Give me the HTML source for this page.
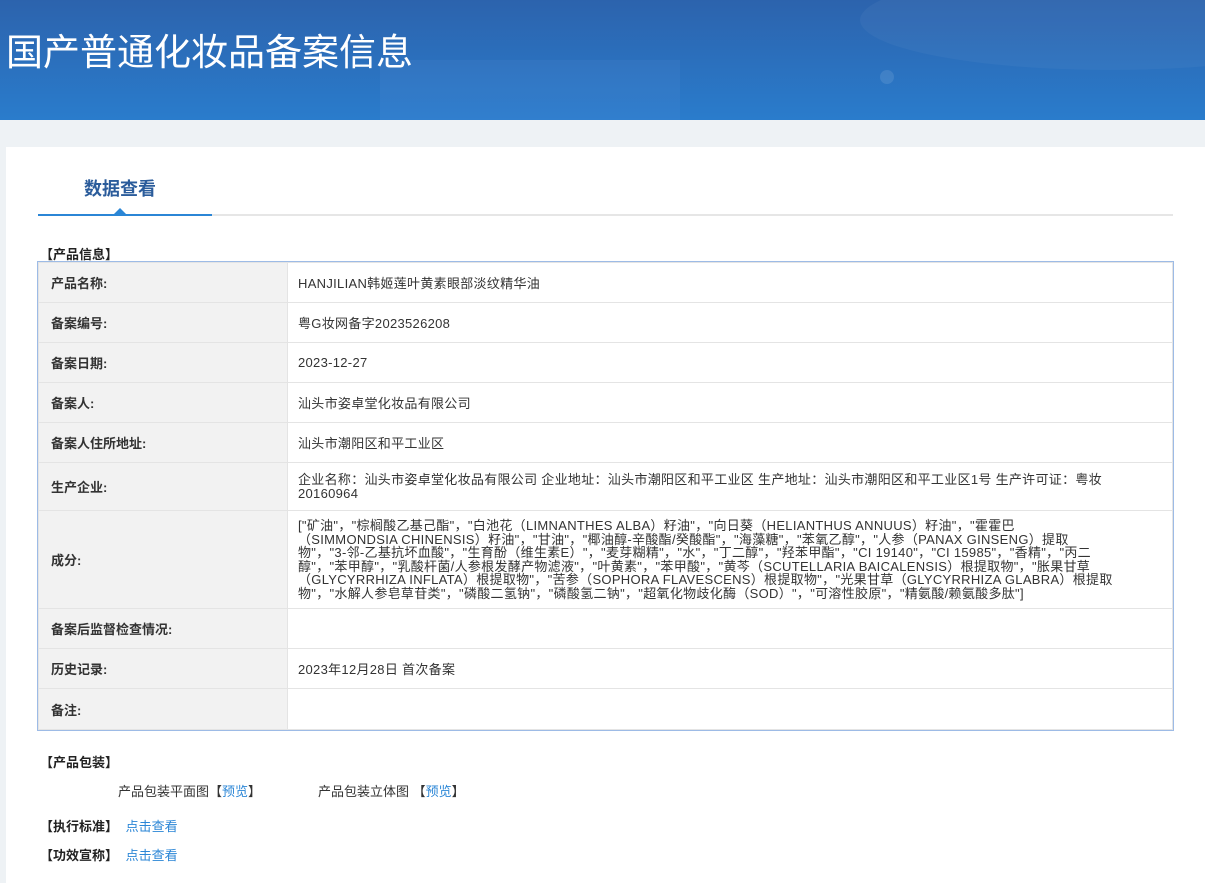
<!DOCTYPE html>
<html><head><meta charset="utf-8">
<style>
*{margin:0;padding:0;box-sizing:border-box}
body{width:1205px;height:883px;overflow:hidden;background:#eef2f5;font-family:"Liberation Sans","Noto Sans CJK SC",sans-serif;color:#333;font-size:13px;position:relative}
.hdr{position:absolute;left:0;top:0;width:1205px;height:120px;background:linear-gradient(180deg,#2c63ad 0%,#2a7ccc 100%);overflow:hidden}
.hdr h1{position:absolute;left:6px;top:22px;color:#fff;font-size:37px;font-weight:normal}
.blob{position:absolute;border-radius:50%;background:rgba(255,255,255,0.04)}
.panel{position:absolute;left:6px;top:147px;width:1199px;height:736px;background:#fff}
.tab{position:absolute;left:84px;top:175px;font-size:18px;font-weight:bold;color:#2b5c9b}
.line{position:absolute;left:38px;top:214px;width:1135px;height:2px;background:#e6e6e6}
.line i{position:absolute;left:0;top:0;width:174px;height:2px;background:#2b86d6}
.tri{position:absolute;left:114px;top:208px;width:0;height:0;border-left:6px solid transparent;border-right:6px solid transparent;border-bottom:6px solid #2b86d6}
.sec{position:absolute;left:40px;font-weight:bold;color:#222;font-size:13px}
table{position:absolute;left:38px;top:262px;width:1135px;border-collapse:collapse;outline:1px solid #9dbbe6}
td{border:1px solid #e4e4e4;padding:0 10px;font-size:13px;color:#333;letter-spacing:0.3px}
td.l{width:249px;background:#f2f2f2;font-weight:bold;color:#333;padding-left:12px;letter-spacing:0}
.ing{line-height:13.5px;font-size:13px;letter-spacing:0.3px}
a{color:#2b86d6;text-decoration:none}
.t{position:absolute;font-size:13px;color:#333}
</style></head><body>
<div class="hdr">
<div class="blob" style="left:380px;top:60px;width:300px;height:200px;background:rgba(120,160,230,0.1);border-radius:0"></div>
<div class="blob" style="left:860px;top:-30px;width:500px;height:100px"></div>
<div class="blob" style="left:880px;top:70px;width:14px;height:14px;background:rgba(255,255,255,0.1)"></div>
<h1>国产普通化妆品备案信息</h1>
</div>
<div class="panel"></div>
<div class="tab">数据查看</div>
<div class="line"><i></i></div>
<div class="tri"></div>
<div class="sec" style="top:244px">【产品信息】</div>
<table>
<tr style="height:40px"><td class="l">产品名称:</td><td>HANJILIAN韩姬莲叶黄素眼部淡纹精华油</td></tr>
<tr style="height:40px"><td class="l">备案编号:</td><td>粤G妆网备字2023526208</td></tr>
<tr style="height:40px"><td class="l">备案日期:</td><td>2023-12-27</td></tr>
<tr style="height:40px"><td class="l">备案人:</td><td>汕头市姿卓堂化妆品有限公司</td></tr>
<tr style="height:40px"><td class="l">备案人住所地址:</td><td>汕头市潮阳区和平工业区</td></tr>
<tr style="height:48px"><td class="l">生产企业:</td><td style="line-height:14px">企业名称：汕头市姿卓堂化妆品有限公司 企业地址：汕头市潮阳区和平工业区 生产地址：汕头市潮阳区和平工业区1号 生产许可证：粤妆<br>20160964</td></tr>
<tr style="height:98px"><td class="l">成分:</td><td class="ing">["矿油"，"棕榈酸乙基己酯"，"白池花（LIMNANTHES ALBA）籽油"，"向日葵（HELIANTHUS ANNUUS）籽油"，"霍霍巴<br>（SIMMONDSIA CHINENSIS）籽油"，"甘油"，"椰油醇-辛酸酯/癸酸酯"，"海藻糖"，"苯氧乙醇"，"人参（PANAX GINSENG）提取<br>物"，"3-邻-乙基抗坏血酸"，"生育酚（维生素E）"，"麦芽糊精"，"水"，"丁二醇"，"羟苯甲酯"，"CI 19140"，"CI 15985"，"香精"，"丙二<br>醇"，"苯甲醇"，"乳酸杆菌/人参根发酵产物滤液"，"叶黄素"，"苯甲酸"，"黄芩（SCUTELLARIA BAICALENSIS）根提取物"，"胀果甘草<br>（GLYCYRRHIZA INFLATA）根提取物"，"苦参（SOPHORA FLAVESCENS）根提取物"，"光果甘草（GLYCYRRHIZA GLABRA）根提取<br>物"，"水解人参皂草苷类"，"磷酸二氢钠"，"磷酸氢二钠"，"超氧化物歧化酶（SOD）"，"可溶性胶原"，"精氨酸/赖氨酸多肽"]</td></tr>
<tr style="height:40px"><td class="l">备案后监督检查情况:</td><td></td></tr>
<tr style="height:40px"><td class="l">历史记录:</td><td>2023年12月28日 首次备案</td></tr>
<tr style="height:41px"><td class="l">备注:</td><td></td></tr>
</table>
<div class="sec" style="top:752px">【产品包装】</div>
<div class="t" style="left:118px;top:781px">产品包装平面图【<a>预览</a>】</div>
<div class="t" style="left:318px;top:781px">产品包装立体图 【<a>预览</a>】</div>
<div class="sec" style="top:816px">【执行标准】 <a style="font-weight:normal;margin-left:4px">点击查看</a></div>
<div class="sec" style="top:845px">【功效宣称】 <a style="font-weight:normal;margin-left:4px">点击查看</a></div>
</body></html>
